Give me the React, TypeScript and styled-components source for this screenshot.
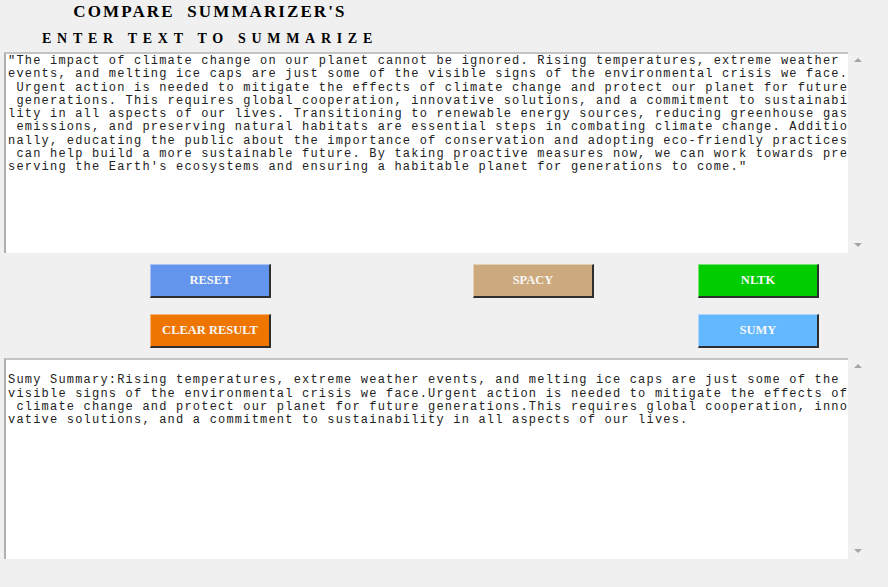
import React from "react";
import styled, { createGlobalStyle } from "styled-components";

const Global = createGlobalStyle`
  html, body {
    margin: 0;
    padding: 0;
    background: #f0f0f0;
  }
  body {
    font-family: "Liberation Serif", serif;
    width: 888px;
    height: 587px;
    overflow: hidden;
  }
`;

const Page = styled.div`
  width: 888px;
  height: 587px;
  background: #f0f0f0;
  display: flex;
  flex-direction: column;
`;

const Header = styled.header`
  width: 420px;
  padding-top: 2px;
  display: flex;
  flex-direction: column;
  align-items: center;
`;

const Title = styled.h1`
  margin: 0;
  font-family: "Liberation Serif", serif;
  font-weight: bold;
  font-size: 17px;
  line-height: 20px;
  letter-spacing: 2.1px;
  color: #000;
  white-space: pre;
`;

const Subtitle = styled.h2`
  margin: 8px 0 0 0;
  font-family: "Liberation Serif", serif;
  font-weight: bold;
  font-size: 14px;
  line-height: 18px;
  letter-spacing: 5.7px;
  color: #000;
  white-space: pre;
`;

const TextRow = styled.div<{ $mt: number }>`
  display: flex;
  margin-left: 4px;
  margin-top: ${(p) => p.$mt}px;
  height: 201px;
`;

const TextBox = styled.div`
  box-sizing: border-box;
  width: 844px;
  height: 201px;
  background: #fff;
  border-top: 2px solid #c4c4c4;
  border-left: 2px solid #b0b0b0;
  padding: 1px 0 0 2px;
  font-family: "Liberation Mono", monospace;
  font-size: 12px;
  letter-spacing: 1.2px;
  line-height: 13.3px;
  color: #222;
  overflow: hidden;
`;

const Line = styled.div`
  white-space: pre;
  height: 13.3px;
`;

const Scrollbar = styled.div`
  width: 18px;
  height: 201px;
  display: flex;
  flex-direction: column;
  justify-content: space-between;
  align-items: center;
  padding: 6px 0 6px 2px;
  box-sizing: border-box;
`;

const Arrow = styled.div<{ $down?: boolean }>`
  width: 0;
  height: 0;
  border-left: 4px solid transparent;
  border-right: 4px solid transparent;
  ${(p) =>
    p.$down
      ? "border-top: 4px solid #a6a6a6;"
      : "border-bottom: 4px solid #a6a6a6;"}
`;

const ButtonGrid = styled.div`
  display: grid;
  grid-template-columns: 150px 120px 203px 120px 105px 120px;
  grid-template-rows: 33px 33px;
  row-gap: 17px;
  margin-top: 11px;
`;

const Btn = styled.button<{ $bg: string; $col: number; $row: number }>`
  grid-column: ${(p) => p.$col};
  grid-row: ${(p) => p.$row};
  box-sizing: border-box;
  width: 121px;
  height: 34px;
  margin: 0;
  padding: 0;
  background: ${(p) => p.$bg};
  border-style: solid;
  border-width: 1px 2px 2px 1px;
  border-color: rgba(255, 255, 255, 0.45) #2e2e2e #2e2e2e
    rgba(255, 255, 255, 0.45);
  font-family: "Liberation Serif", serif;
  font-weight: bold;
  font-size: 12.5px;
  color: #f7f7f7;
  cursor: pointer;
`;

const inputLines = [
  `"The impact of climate change on our planet cannot be ignored. Rising temperatures, extreme weather`,
  `events, and melting ice caps are just some of the visible signs of the environmental crisis we face.`,
  ` Urgent action is needed to mitigate the effects of climate change and protect our planet for future`,
  ` generations. This requires global cooperation, innovative solutions, and a commitment to sustainabi`,
  `lity in all aspects of our lives. Transitioning to renewable energy sources, reducing greenhouse gas`,
  ` emissions, and preserving natural habitats are essential steps in combating climate change. Additio`,
  `nally, educating the public about the importance of conservation and adopting eco-friendly practices`,
  ` can help build a more sustainable future. By taking proactive measures now, we can work towards pre`,
  `serving the Earth's ecosystems and ensuring a habitable planet for generations to come."`,
];

const resultLines = [
  ``,
  `Sumy Summary:Rising temperatures, extreme weather events, and melting ice caps are just some of the `,
  `visible signs of the environmental crisis we face.Urgent action is needed to mitigate the effects of`,
  ` climate change and protect our planet for future generations.This requires global cooperation, inno`,
  `vative solutions, and a commitment to sustainability in all aspects of our lives.`,
];

const TextArea: React.FC<{ lines: string[]; mt: number }> = ({ lines, mt }) => (
  <TextRow $mt={mt}>
    <TextBox>
      {lines.map((l, i) => (
        <Line key={i}>{l || " "}</Line>
      ))}
    </TextBox>
    <Scrollbar>
      <Arrow />
      <Arrow $down />
    </Scrollbar>
  </TextRow>
);

export default function App() {
  return (
    <Page>
      <Global />
      <Header>
        <Title>{"COMPARE  SUMMARIZER'S"}</Title>
        <Subtitle>ENTER TEXT TO SUMMARIZE</Subtitle>
      </Header>
      <TextArea lines={inputLines} mt={4} />
      <ButtonGrid>
        <Btn $bg="#6495ED" $col={2} $row={1}>RESET</Btn>
        <Btn $bg="#CDAA7D" $col={4} $row={1}>SPACY</Btn>
        <Btn $bg="#00CD00" $col={6} $row={1}>NLTK</Btn>
        <Btn $bg="#EE7600" $col={2} $row={2}>CLEAR RESULT</Btn>
        <Btn $bg="#63B8FF" $col={6} $row={2}>SUMY</Btn>
      </ButtonGrid>
      <TextArea lines={resultLines} mt={11} />
    </Page>
  );
}
